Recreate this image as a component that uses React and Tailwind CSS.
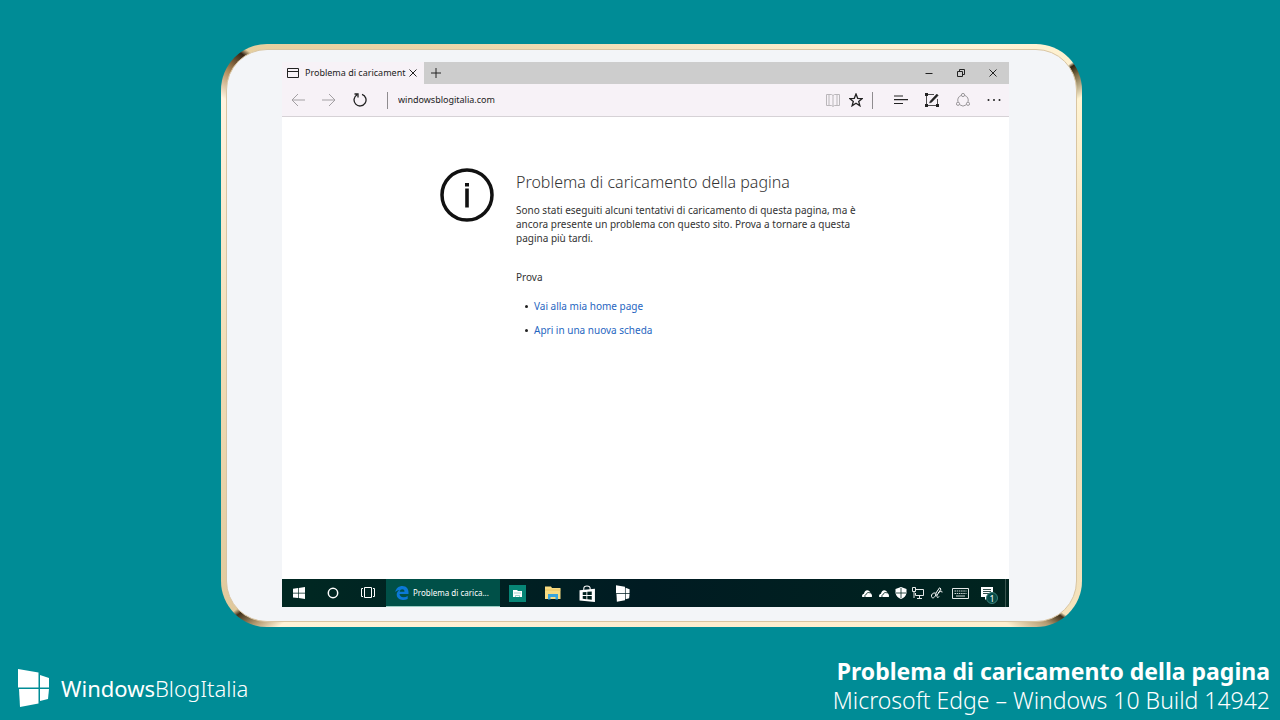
const Svg = ({ className = "w-4 h-4", box = "0 0 16 16", children }) => (
  <svg className={"shrink-0 " + className} viewBox={box} fill="none" stroke="currentColor" aria-hidden="true">
    {children}
  </svg>
);

const FlagLogo = ({ className }) => (
  <Svg className={className} box="0 0 32 38">
    <g fill="currentColor" stroke="none">
      <path d="M0 0L20.500 3.500V18.500H0Z" />
      <path d="M22 6L31 9V18.500H22Z" />
      <path d="M1 20H20.500V34.500L2 38Z" />
      <path d="M22 20H31L30 30L22 32Z" />
    </g>
  </Svg>
);

const windowButton = "flex h-6 w-8 shrink-0 items-center justify-center";
const toolButton = "flex h-6 w-[31px] shrink-0 items-center justify-center";

function TabBar() {
  return (
    <div className="flex h-[22px] bg-[#cdcdcd] text-[#222]">
      <div className="flex w-[142px] shrink-0 items-center bg-[#f7f2f7] pl-[5px]">
        <Svg className="h-3 w-3" box="0 0 12 12">
          <path d="M.5 1.500H11.500V10.500H.5ZM.5 4.500H11.500" />
        </Svg>
        <span className="ml-[6px] whitespace-nowrap text-[9px] leading-4">Problema di caricament</span>
        <button aria-label="Chiudi scheda" className="ml-auto mr-1 flex h-4 w-4 items-center justify-center">
          <Svg className="h-2 w-2" box="0 0 8 8"><path d="M.5 .5L7.500 7.500M7.500 .5L.5 7.500" /></Svg>
        </button>
      </div>
      <button aria-label="Nuova scheda" className="flex w-6 items-center justify-center">
        <Svg className="h-[10px] w-[10px]" box="0 0 10 10"><path d="M5 0V10M0 5H10" /></Svg>
      </button>
      <div className="ml-auto flex items-center">
        <button aria-label="Riduci a icona" className={windowButton}>
          <Svg className="h-2 w-2" box="0 0 8 8"><path d="M0.500 4.500H7.500" /></Svg>
        </button>
        <button aria-label="Ripristina" className={windowButton}>
          <Svg className="h-2 w-2" box="0 0 8 8"><path d="M.5 2.500H5.500V7.500H.5ZM2.500 2.500V.5H7.500V5.500H5.500" /></Svg>
        </button>
        <button aria-label="Chiudi" className={windowButton}>
          <Svg className="h-2 w-2" box="0 0 8 8"><path d="M.5 .5L7.500 7.500M7.500 .5L.5 7.500" /></Svg>
        </button>
      </div>
    </div>
  );
}

function AddressBar() {
  return (
    <div className="flex h-[33px] items-center border-b border-[#d6d2d6] bg-[#f7f2f7] text-[#222]">
      <button aria-label="Indietro" className={toolButton + " text-[#a3a0a3]"}>
        <Svg className="h-[14px] w-[14px]" box="0 0 14 14"><path d="M14 7H1M7 1L1 7L7 13" /></Svg>
      </button>
      <button aria-label="Avanti" className={toolButton + " text-[#a3a0a3]"}>
        <Svg className="h-[14px] w-[14px]" box="0 0 14 14"><path d="M0 7H13M7 1L13 7L7 13" /></Svg>
      </button>
      <button aria-label="Aggiorna" className={toolButton}>
        <Svg className="h-[14px] w-[14px]" box="0 0 14 14">
          <path strokeWidth="1.300" d="M9 1.300A6 6 0 1 1 4 1.800M1.500 1H5V4.500" />
        </Svg>
      </button>
      <span className="ml-3 h-[17px] w-px shrink-0 bg-[#8f8c8f]" />
      <input aria-label="Indirizzo" defaultValue="windowsblogitalia.com" className="ml-[10px] min-w-0 flex-1 bg-transparent text-[9px] outline-none" />
      <button aria-label="Visualizzazione di lettura" className="flex h-6 w-6 shrink-0 items-center justify-center text-[#bab7ba]">
        <Svg className="h-[14px] w-[14px]" box="0 0 14 14">
          <path d="M.5 1.500H5.500L7 2.500L8.500 1.500H13.500V12.500H8.500L7 13.500L5.500 12.500H.5ZM7 2.500V13M3 1.500V12.500M11 1.500V12.500" />
        </Svg>
      </button>
      <button aria-label="Aggiungi ai preferiti" className="flex h-6 w-[22px] shrink-0 items-center justify-center">
        <Svg className="h-[14px] w-[14px]" box="0 0 14 14">
          <path strokeWidth="1.300" d="M7 1L8.700 5.300L13.200 5.500L9.700 8.400L10.900 12.800L7 10.300L3.100 12.800L4.300 8.400L.8 5.500L5.300 5.300Z" />
        </Svg>
      </button>
      <span className="ml-[5px] mr-3 h-[17px] w-px shrink-0 bg-[#8f8c8f]" />
      <button aria-label="Hub" className={toolButton}>
        <Svg className="h-[14px] w-[14px]" box="0 0 14 14"><path d="M0 3H9M0 6.700H14M0 10.500H9" strokeWidth="1.200" /></Svg>
      </button>
      <button aria-label="Crea nota Web" className={toolButton}>
        <Svg className="h-[14px] w-[14px]" box="0 0 14 14">
          <path d="M9 1.500H1.500V12.500H12.500V6" strokeWidth=".8" />
          <path d="M4.500 10L5.300 8L11.800 1L13.200 2.400L6.600 9.300Z" fill="currentColor" strokeWidth=".5" />
          <path d="M0 0H3V3H0ZM0 11H3V14H0ZM11 11H14V14H11Z" fill="currentColor" stroke="none" />
        </Svg>
      </button>
      <button aria-label="Condividi" className={toolButton + " text-[#9a979a]"}>
        <Svg className="h-[14px] w-[14px]" box="0 0 14 14">
          <circle cx="7" cy="2" r="1.600" /><circle cx="2" cy="10.800" r="1.600" /><circle cx="12" cy="10.800" r="1.600" />
          <path d="M5 2.500A5 5 0 0 0 2 8.800M9 2.500A5 5 0 0 1 12 8.800M3.800 11.800A5 5 0 0 0 10.200 11.800" />
        </Svg>
      </button>
      <button aria-label="Altre azioni" className={toolButton}>
        <Svg className="h-[14px] w-[14px]" box="0 0 14 14">
          <g fill="currentColor" stroke="none"><circle cx="1.500" cy="7" r="1" /><circle cx="7" cy="7" r="1" /><circle cx="12.500" cy="7" r="1" /></g>
        </Svg>
      </button>
    </div>
  );
}

const Suggestion = ({ href, children }) => (
  <li className="flex items-center gap-[6px]">
    <span className="h-[3px] w-[3px] rounded-full bg-[#222]" />
    <a href={href}>{children}</a>
  </li>
);

function ErrorPage() {
  return (
    <section className="flex flex-1 items-start bg-white pl-[157px] pr-[120px] pt-[51px] text-[#333]">
      <Svg className="h-[56px] w-[56px] text-[#111]" box="0 0 56 56">
        <circle cx="28" cy="27" r="25" strokeWidth="3.500" />
        <path d="M28 20.500V39.500" strokeWidth="3.600" />
        <path d="M26 15H30V18.500H26Z" fill="currentColor" stroke="none" />
      </Svg>
      <div className="ml-[21px] text-[10px] leading-[14px]">
        <h1 className="pt-[2px] text-[16px] font-light leading-6">Problema di caricamento della pagina</h1>
        <p className="mt-[9px]">
          Sono stati eseguiti alcuni tentativi di caricamento di questa pagina, ma è<br />
          ancora presente un problema con questo sito. Prova a tornare a questa<br />
          pagina più tardi.
        </p>
        <p className="mt-[25px]">Prova</p>
        <ul className="mt-[15px] flex flex-col gap-[10px] pl-[9px] text-[#1f66c1]">
          <Suggestion href="#home">Vai alla mia home page</Suggestion>
          <Suggestion href="#nuova">Apri in una nuova scheda</Suggestion>
        </ul>
      </div>
    </section>
  );
}

const Cloud = () => (
  <Svg className="h-[10px] w-[10px]" box="0 0 10 10">
    <path fill="currentColor" stroke="none" d="M.2 9C-.3 7 .7 5.800 2 5.700C2.200 3 5 1 7.200 3C8 3.600 8.200 4.200 8.300 5C9.600 5.500 10.400 7.500 9.800 9Z" />
    <path stroke="#00241f" strokeWidth=".8" d="M3 9C2.600 7.400 3.300 6.500 4.300 6.400C4.600 4.600 6.400 4 8.300 5" />
  </Svg>
);

function Taskbar() {
  const item = "flex h-full w-[35px] shrink-0 items-center justify-center";
  const system = "flex h-full w-[34px] shrink-0 items-center justify-center";
  const tray = "flex h-full w-[17px] items-center justify-center";
  return (
    <nav aria-label="Barra delle applicazioni" className="flex h-[28px] bg-gradient-to-r from-[#002822] via-[#001b22] to-[#00241f] text-white">
      <button aria-label="Start" className={system}>
        <Svg className="h-3 w-3" box="0 0 12 12"><path fill="currentColor" stroke="none" d="M0 1.700L5 1V5.700H0ZM5.700 .9L12 0V5.700H5.700ZM0 6.400H5V11L0 10.400ZM5.700 6.400H12V12L5.700 11.100Z" /></Svg>
      </button>
      <button aria-label="Cortana" className={system}>
        <Svg className="h-3 w-3" box="0 0 12 12"><circle cx="6" cy="6" r="4.700" strokeWidth="1.500" /></Svg>
      </button>
      <button aria-label="Visualizzazione attività" className="flex w-9 items-center justify-center">
        <Svg className="h-[14px] w-[14px]" box="0 0 14 14"><path d="M3.500 1.500H10.500V11.500H3.500ZM2 2.500H.5V10.500H2M12 2.500H13.500V10.500H12" /></Svg>
      </button>
      <button className="flex w-[114px] shrink-0 items-center border-b border-[#9accc3] bg-[#005048] pl-[9px] text-[8px]">
        <Svg className="h-[14px] w-[14px] text-[#0b78d7]" box="0 0 14 14">
          <path fill="currentColor" stroke="none" d="M.3 6C1 2 4 0 7.300 0C11.500 0 13.500 3 13.500 6.300V8H4.500C4.700 10 6 11.200 8.300 11.200C10 11.200 11.500 10.800 12.700 10V13C11.300 13.700 9.700 14 8 14C4 14 1.700 11.700 1.700 8.600C1.700 6.500 3 4.800 5 4C3.200 4 1.500 4.700 .3 6ZM4.700 5.700H9.500C9.500 4 8.700 3.200 7.200 3.200C5.900 3.200 5 4 4.700 5.700Z" />
        </Svg>
        <span className="ml-1 whitespace-nowrap">Problema di carica...</span>
      </button>
      <button aria-label="File" className={item}>
        <Svg className="h-[17px] w-[17px]" box="0 0 17 17">
          <path fill="#078576" stroke="none" d="M0 0H17V17H0Z" />
          <path fill="#fff" stroke="none" d="M4 5H8L9 6H13V12H4Z" />
          <path stroke="#7fc0b8" strokeWidth=".7" d="M5 8H12M6.500 12V10.500H10.500V12" />
        </Svg>
      </button>
      <button aria-label="Esplora file" className={item}>
        <Svg className="h-4 w-4"><path fill="#f8dc82" stroke="none" d="M0 1.500H6L7 3H15.500V14H0Z" /><path stroke="#e9bc52" strokeWidth=".7" d="M0 5H15.500" /><path fill="#38a5dc" stroke="none" d="M3 9H13V14.500H10.500V12H5.500V14.500H3Z" /></Svg>
      </button>
      <button aria-label="Store" className={item}>
        <Svg className="h-[17px] w-[17px]" box="0 0 16 16"><path fill="currentColor" stroke="none" d="M.5 5L15 3.500V16L.5 14.500Z" /><path d="M4.500 5V3.500C4.500 0 10.500 0 10.500 3.500V5" /><path fill="#00201e" stroke="none" d="M3.500 6.800L7 6.500V9.500H3.500ZM7.800 6.400L12 6V9.500H7.800ZM3.500 10.300H7V13.300L3.500 13ZM7.800 10.300H12V13.900L7.800 13.400Z" /></Svg>
      </button>
      <button aria-label="WindowsBlogItalia" className={item}><FlagLogo className="h-[17px] w-[14px]" /></button>
      <div className="ml-auto flex">
        <button aria-label="OneDrive" className={tray}><Cloud /></button>
        <button aria-label="OneDrive aziendale" className={tray}><Cloud /></button>
        <button aria-label="Sicurezza" className={tray}>
          <Svg className="h-3 w-3" box="0 0 12 12"><path fill="currentColor" stroke="none" d="M6 0L11.500 2V6C11 9 9 11 6 12C3 11 1 9 .5 6V2Z" /><path stroke="#00241f" strokeWidth=".8" d="M6 1V11M1 6H11" /></Svg>
        </button>
        <button aria-label="Rete" className={tray}>
          <Svg className="h-3 w-3" box="0 0 12 12"><path d="M4 2.500H11.500V8.500H3.500V6M7.500 8.500V11M5 11.500H10M.5 .5H3.500V4.500H.5ZM2 4.500V11" strokeWidth=".9" /></Svg>
        </button>
        <button aria-label="Penna" className="flex w-[22px] items-center justify-center">
          <Svg className="h-3 w-3" box="0 0 12 12"><path d="M4.500 8.500L5 6L8.500 .8L10 2L6.500 7.500ZM4.500 6C2 5.500 0 7.500 .5 9.500C1 11.500 3 11.500 4.500 8.500M6.500 7.500C5 10.500 7 11.500 8 9.500M7 6C9 4 11.500 3.500 11 5.500" /></Svg>
        </button>
        <button aria-label="Tastiera" className="flex w-[24px] items-center justify-center">
          <Svg className="h-[11px] w-[17px]" box="0 0 17 11"><path d="M.5 .5H16.500V10.500H.5Z" strokeWidth=".9" /><path strokeDasharray="1.500 .7" strokeWidth=".8" d="M2.500 3H14.500M2.500 5.500H14.500" /><path d="M4 8H13" strokeWidth=".8" /></Svg>
        </button>
        <button aria-label="Centro notifiche, 1 nuova" className="relative flex w-[30px] items-center justify-center">
          <Svg className="h-[13px] w-[13px]" box="0 0 13 13"><path fill="currentColor" stroke="none" d="M0 0H12V10H7L4 13V10H0Z" /><path stroke="#00241f" strokeWidth=".8" d="M2 2.500H10M2 4.500H10M2 6.500H8" /></Svg>
          <span className="absolute bottom-[3px] right-[4px] flex h-3 w-3 items-center justify-center rounded-full border border-[#397d76] bg-[#064b47] text-[9px] leading-none">1</span>
        </button>
        <span className="ml-[3px] mr-[3px] w-px bg-[#39544f]" />
      </div>
    </nav>
  );
}

export default function App() {
  return (
    <div className="flex min-h-screen flex-col bg-[#008c96] font-['Noto_Sans','Open_Sans',sans-serif]">
      <main className="flex flex-1 flex-col pb-7 pl-[221px] pr-[198px] pt-[44px]">
        <div className="flex flex-1 rounded-[46px] bg-[conic-gradient(from_0deg,#f5e3bd_0deg,#fff3d5_50deg,#fdf0cf_57deg,#30240f_57.4deg,#7d6c45_58.5deg,#fff3d2_61deg,#ead7b1_90deg,#f5e3bd_124deg,#40301a_124.4deg,#b39a70_126deg,#fff0d0_129deg,#fbecd0_180deg,#fff3d8_232deg,#b39a70_234deg,#40301a_236deg,#e0c99c_236.600deg,#f3dfb9_270deg,#fff3df_299deg,#b08a58_302deg,#352414_304.500deg,#e6cf9f_305.200deg,#f5e3bd_360deg)] p-[5px]">
          <div className="flex flex-1 rounded-[41px] border border-[#d9c5a2] bg-[#f3f5f8] pb-[14px] pl-[55px] pr-[67px] pt-[12px]">
            <div className="flex min-w-0 flex-1 flex-col">
              <TabBar />
              <AddressBar />
              <ErrorPage />
              <Taskbar />
            </div>
          </div>
        </div>
      </main>
      <footer className="flex h-[65px] items-start justify-between gap-4 pl-[18px] pr-[10px] pt-[2px] text-white">
        <div className="flex items-center pt-[12px]">
          <FlagLogo className="h-[38px] w-[32px]" />
          <span className="ml-[11px] text-[22px] font-light leading-[38px]"><span className="font-normal">Windows</span>BlogItalia</span>
        </div>
        <div className="text-right text-[23px] leading-[29px]">
          <p className="font-bold">Problema di caricamento della pagina</p>
          <p className="font-light">Microsoft Edge – Windows 10 Build 14942</p>
        </div>
      </footer>
    </div>
  );
}
